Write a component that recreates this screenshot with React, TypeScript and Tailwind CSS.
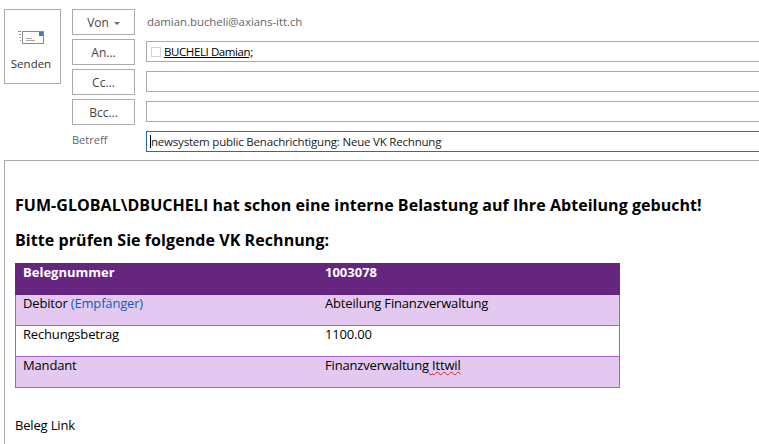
function SendIcon() {
  return (
    <svg width="28" height="15" viewBox="0 0 28 15" fill="none">
      <path d="M1 1.5h3M2 4.5h2M3 7.5h1M3 10.5h1" stroke="#8a8a8a" />
      <rect x="5.5" y="1.5" width="21" height="12" fill="#fff" stroke="#8a8a8a" />
      <path d="M9 10.5h9M9 8.5h6" stroke="#a6a6a6" />
      <rect x="22" y="2" width="4" height="4" fill="#3f7cbf" />
    </svg>
  );
}

function FieldButton({ label, caret }: { label: string; caret?: boolean }) {
  return (
    <div className="w-[63px] h-[26px] border border-[#ababab] flex items-center justify-center gap-[5px] pt-[1px] text-[12px] text-[#444]">
      <span>{label}</span>
      {caret && <span className="w-0 h-0 border-x-[3px] border-x-transparent border-t-[3px] border-t-[#666] mt-[1px]" />}
    </div>
  );
}

const rows = [
  { label: 'Debitor', extra: '(Empfänger)', value: 'Abteilung Finanzverwaltung', shaded: true },
  { label: 'Rechungsbetrag', value: '1100.00', shaded: false },
  { label: 'Mandant', value: 'Finanzverwaltung', typo: 'Ittwil', shaded: true },
];

export default function App() {
  return (
    <div className="w-[759px] h-[444px] overflow-hidden bg-white text-black font-['Open_Sans','Noto_Sans',sans-serif]">
      {/* Header */}
      <div className="flex pt-[9px] pl-[4px] h-[160px]">
        <div className="w-[57px] h-[75px] border border-[#ababab] flex flex-col items-center pt-[20px] pr-[3px] mr-[11px]">
          <SendIcon />
          <span className="text-[11.5px] text-[#333] mt-[11px] leading-[16px]">Senden</span>
        </div>
        <div className="flex flex-col gap-[4px] mr-[11px]">
          <FieldButton label="Von" caret />
          <FieldButton label="An..." />
          <FieldButton label="Cc..." />
          <FieldButton label="Bcc..." />
          <span className="text-[11px] leading-[16px] text-[#666] mt-[3px]">Betreff</span>
        </div>
        <div className="flex-1 flex flex-col">
          <div className="h-[32px] pb-[6px] flex items-center pl-px text-[11.5px] tracking-[-0.07px] text-[#666]">damian.bucheli@axians-itt.ch</div>
          <div className="h-[21px] border border-r-0 border-[#ababab] flex items-center pl-[4px] text-[11.5px]">
            <span className="w-[10px] h-[10px] border border-[#d4d4d4] mr-[3px]" />
            <span className="underline tracking-[-0.4px]">BUCHELI Damian;</span>
          </div>
          <div className="h-[21px] border border-r-0 border-[#ababab] mt-[9px]" />
          <div className="h-[21px] border border-r-0 border-[#ababab] mt-[9px]" />
          <div className="h-[21px] border border-r-0 border-[#1f6fb5] mt-[9px] flex items-center pl-[3px] text-[11.5px] tracking-[-0.2px] text-[#222]">
            <span className="w-px h-[13px] bg-black" />
            newsystem public Benachrichtigung: Neue VK Rechnung
          </div>
        </div>
      </div>

      {/* Body */}
      <div className="ml-[4px] h-[284px] border-t border-l border-[#ababab] pl-[10px] pt-[33px]">
        <h1 className="text-[16px] leading-[22px] font-bold tracking-[0.05px]">FUM-GLOBAL\DBUCHELI hat schon eine interne Belastung auf Ihre Abteilung gebucht!</h1>
        <h2 className="text-[16px] leading-[22px] font-bold tracking-[0.07px] mt-[13px]">Bitte prüfen Sie folgende VK Rechnung:</h2>
        <div className="w-[605px] mt-[12px] border-x border-b border-[#a95fd0] text-[13px] leading-[17px] tracking-[-0.17px]">
          <div className="-mx-px h-[32px] bg-[#66257f] text-white font-bold tracking-normal flex pt-[1px]">
            <span className="w-[302px] pl-[8px]">Belegnummer</span>
            <span className="pl-[8px]">1003078</span>
          </div>
          {rows.map((row, i) => (
            <div
              key={row.label}
              className={`flex ${row.shaded ? 'bg-[#e3c9f0]' : 'bg-white'} ${i < rows.length - 1 ? 'h-[31px] border-b border-[#a95fd0]' : 'h-[30px]'}`}
            >
              <span className="w-[301px] pl-[7px]">
                {row.label}
                {row.extra && <span className="text-[#0f5cc0]"> {row.extra}</span>}
              </span>
              <span className="pl-[8px]">
                {row.value}
                {row.typo && (
                  <span className="underline decoration-wavy decoration-[#e02020] decoration-1"> {row.typo}</span>
                )}
              </span>
            </div>
          ))}
        </div>
        <p className="text-[13px] leading-[17px] mt-[29px] tracking-[-0.17px]">Beleg Link</p>
      </div>
    </div>
  );
}
